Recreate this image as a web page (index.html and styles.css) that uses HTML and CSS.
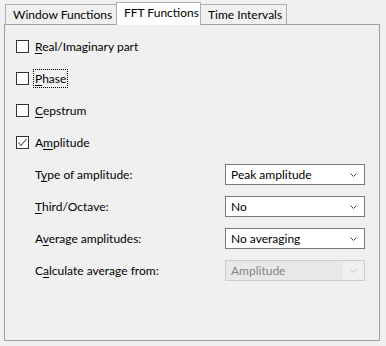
FILE: index.html
```html
<!DOCTYPE html>
<html>
<head>
<meta charset="utf-8">
<link rel="stylesheet" href="styles.css">
</head>
<body>
<div class="tabctl">
  <div class="tabs">
    <div class="tab tab-window">Window Functions</div>
    <div class="tab tab-fft active">FFT Functions</div>
    <div class="tab tab-time">Time Intervals</div>
  </div>
  <div class="panel">
    <div class="check"><span class="box"></span><span class="lbl"><u>R</u>eal/Imaginary part</span></div>
    <div class="check"><span class="box"></span><span class="lbl focus"><u>P</u>hase</span></div>
    <div class="check"><span class="box"></span><span class="lbl"><u>C</u>epstrum</span></div>
    <div class="check"><span class="box checked"><svg width="11" height="11" viewBox="0 0 11 11"><polyline points="1.5,5.5 4,8.5 9.5,2" fill="none" stroke="#4d4d4d" stroke-width="1.1"/></svg></span><span class="lbl">A<u>m</u>plitude</span></div>
    <div class="field"><span class="flbl">T<u>y</u>pe of amplitude:</span><div class="select"><span>Peak amplitude</span><svg class="chev" width="7" height="4" viewBox="0 0 7 4"><polyline points="0.5,0.5 3.5,3.5 6.5,0.5" fill="none" stroke="#444" stroke-width="1"/></svg></div></div>
    <div class="field"><span class="flbl"><u>T</u>hird/Octave:</span><div class="select"><span>No</span><svg class="chev" width="7" height="4" viewBox="0 0 7 4"><polyline points="0.5,0.5 3.5,3.5 6.5,0.5" fill="none" stroke="#444" stroke-width="1"/></svg></div></div>
    <div class="field"><span class="flbl">A<u>v</u>erage amplitudes:</span><div class="select"><span>No averaging</span><svg class="chev" width="7" height="4" viewBox="0 0 7 4"><polyline points="0.5,0.5 3.5,3.5 6.5,0.5" fill="none" stroke="#444" stroke-width="1"/></svg></div></div>
    <div class="field"><span class="flbl">C<u>a</u>lculate average from:</span><div class="select disabled"><span class="val">Amplitude</span><span class="arrow"><svg class="chev" width="7" height="4" viewBox="0 0 7 4"><polyline points="0.5,0.5 3.5,3.5 6.5,0.5" fill="none" stroke="#bfbfbf" stroke-width="1"/></svg></span></div></div>
  </div>
</div>
</body>
</html>
```
FILE: styles.css
```css
html, body {
  margin: 0;
  padding: 0;
  background: #f0f0f0;
}
body {
  font-family: "Segoe UI", Lato, "Noto Sans", sans-serif;
  font-size: 12px;
  color: #000;
  width: 386px;
  height: 346px;
  overflow: hidden;
}
u {
  text-decoration: underline;
  text-underline-offset: 2px;
}
.tabctl {
  padding-top: 2px;
}
.tabs {
  display: flex;
  align-items: flex-end;
  height: 22px;
  padding-left: 5px;
}
.tab {
  box-sizing: border-box;
  height: 20px;
  border: 1px solid #adadad;
  border-bottom: none;
  background: #f0f0f0;
  display: flex;
  align-items: center;
  padding-left: 7px;
  line-height: 1;
  white-space: nowrap;
  overflow: hidden;
}
.tab-window { width: 111px; border-right: none; }
.tab-fft { width: 85px; }
.tab-time { width: 86px; border-left: none; padding-left: 7px; }
.tab.active {
  height: 23px;
  margin-bottom: -1px;
  background: #fff;
  border-color: #adadad;
  position: relative;
  z-index: 1;
  padding-left: 7px;
  padding-bottom: 3px;
}
.panel {
  box-sizing: border-box;
  margin-left: 4px;
  width: 376px;
  height: 317px;
  border: 1px solid #a0a0a0;
  padding: 11px 0 0 11px;
  display: flex;
  flex-direction: column;
  gap: 11px;
}
.check {
  height: 21px;
  display: flex;
  align-items: center;
}
.box {
  box-sizing: border-box;
  width: 13px;
  height: 13px;
  border: 1px solid #333;
  background: #fff;
  display: flex;
  align-items: center;
  justify-content: center;
}
.lbl {
  margin-left: 6px;
}
.focus {
  outline: 1px dotted #000;
  outline-offset: 0;
  padding: 1px 1px;
  margin-left: 5px;
}
.field {
  height: 21px;
  display: flex;
  align-items: center;
  padding-left: 19px;
}
.flbl {
  width: 190px;
}
.select {
  box-sizing: border-box;
  width: 140px;
  height: 21px;
  border: 1px solid #7a7a7a;
  background: #fff;
  display: flex;
  align-items: center;
  justify-content: space-between;
  padding: 0 7px 0 5px;
}
.select.disabled {
  border-color: #cccccc;
  background: #e8e8e8;
  color: #838383;
  padding: 0;
}
.select.disabled .val {
  padding-left: 5px;
}
.select.disabled .arrow {
  height: 100%;
  width: 21px;
  background: #f0f0f0;
  display: flex;
  align-items: center;
  justify-content: flex-end;
  padding-right: 7px;
  box-sizing: border-box;
}
.chev {
  display: block;
}
```
